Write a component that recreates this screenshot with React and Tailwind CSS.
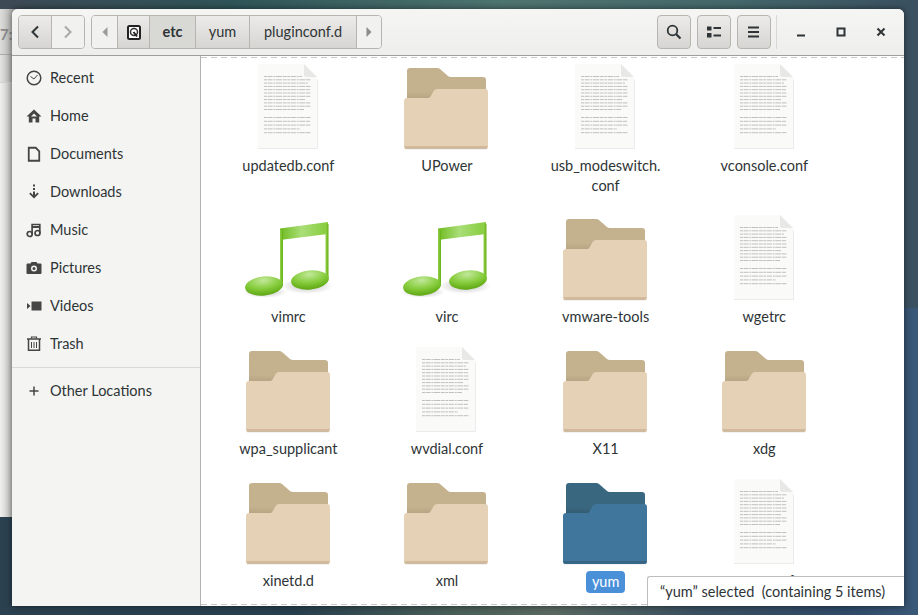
const FONT = "font-['Lato','Noto_Sans',sans-serif]";

function Folder({ selected }) {
  const id = selected ? "s" : "n";
  const c = selected
    ? { b1: "#3a6780", b2: "#2f566b", f1: "#41769c", f2: "#3e7297", e: "#356583" }
    : { b1: "#c4b28f", b2: "#ae9c7b", f1: "#e4d1b6", f2: "#e2d0b4", e: "#d3b999" };
  return (
    <svg width="84" height="82" viewBox="0 0 84 82">
      <defs>
        <linearGradient id={`back${id}`} x1="0" y1="0" x2="0" y2="1">
          <stop offset="0" stopColor={c.b1} />
          <stop offset="0.7" stopColor={c.b1} />
          <stop offset="1" stopColor={c.b2} />
        </linearGradient>
      </defs>
      <path d="M3 3q0-3 3-3h27q2 0 3 1l8 7q1 1 3 1h32q3 0 3 3v22H3z" fill={`url(#back${id})`} />
      <path d="M0 33q0-3 3-3h21q1.500 0 2.500-1.500l3.500-6q1-1.500 3-1.500h48q3 0 3 3v55q0 2-2 2H2q-2 0-2-2z" fill={c.f1} />
      <path d="M0.500 78h83v1q0 1-2 1H2.500q-2 0-2-1z" fill={c.e} />
      <rect x="1" y="80" width="82" height="1.500" fill="#000" opacity="0.1" />
    </svg>
  );
}

const linesA = [38, 47, 44, 47, 46, 47, 47, 41, 47, 47, 40];
const linesB = [47, 46, 47, 36, 47];

function Doc() {
  const dash = "3 0.6 5 0.8 2 0.6 6 0.7 4 0.6";
  return (
    <svg width="62" height="86" viewBox="0 0 62 86">
      <path d="M1 1h46l14 14v69H1z" fill="#000" opacity="0.08" transform="translate(0 1)" />
      <path d="M1 0h46l13 13v71H1z" fill="#fafaf9" />
      <path d="M47 0l13 13H49q-2 0-2-2z" fill="#e8e8e6" />
      {linesA.map((w, i) => (
        <line key={i} x1="7" x2={7 + w} y1={12.500 + i * 3.300} y2={12.500 + i * 3.300} stroke="#9a9a9a" strokeWidth="1" strokeDasharray={dash} opacity="0.6" />
      ))}
      {linesB.map((w, i) => (
        <line key={i} x1="7" x2={7 + w} y1={53.500 + i * 3.800} y2={53.500 + i * 3.800} stroke="#9a9a9a" strokeWidth="1" strokeDasharray={dash} opacity="0.6" />
      ))}
    </svg>
  );
}

function Note() {
  return (
    <svg width="90" height="84" viewBox="0 0 90 84">
      <defs>
        <radialGradient id="ng" cx="0.5" cy="0.2" r="0.8">
          <stop offset="0" stopColor="#c2e89a" />
          <stop offset="0.55" stopColor="#86cc3c" />
          <stop offset="1" stopColor="#5ea612" />
        </radialGradient>
        <linearGradient id="nb" x1="0" y1="0" x2="1" y2="0">
          <stop offset="0" stopColor="#6fba20" />
          <stop offset="0.45" stopColor="#aade78" />
          <stop offset="1" stopColor="#85cc3a" />
        </linearGradient>
        <linearGradient id="st" x1="0" y1="0" x2="1" y2="0">
          <stop offset="0" stopColor="#93d24e" />
          <stop offset="1" stopColor="#66b014" />
        </linearGradient>
        <radialGradient id="ns">
          <stop offset="0" stopColor="#000" stopOpacity="0.25" />
          <stop offset="1" stopColor="#000" stopOpacity="0" />
        </radialGradient>
      </defs>
      <ellipse cx="22" cy="76" rx="22" ry="6" fill="url(#ns)" />
      <ellipse cx="64" cy="70" rx="26" ry="8" fill="url(#ns)" />
      <path d="M37 12.500L85 6v12L37 24z" fill="url(#nb)" />
      <rect x="37" y="14" width="3" height="56" fill="url(#st)" />
      <rect x="82.500" y="8" width="3" height="54" fill="url(#st)" />
      <ellipse cx="21" cy="70" rx="19" ry="9.500" transform="rotate(-6 21 70)" fill="url(#ng)" />
      <ellipse cx="67" cy="64" rx="19" ry="9.500" transform="rotate(-6 67 64)" fill="url(#ng)" />
    </svg>
  );
}

const items = [
  ["doc", "updatedb.conf"], ["folder", "UPower"], ["doc", "usb_modeswitch.\nconf"], ["doc", "vconsole.conf"],
  ["note", "vimrc"], ["note", "virc"], ["folder", "vmware-tools"], ["doc", "wgetrc"],
  ["folder", "wpa_supplicant"], ["doc", "wvdial.conf"], ["folder", "X11"], ["folder", "xdg"],
  ["folder", "xinetd.d"], ["folder", "xml"], ["sel", "yum"], ["doc", "yum.conf"],
];

const ic = "#454545";
const sideIcons = {
  Recent: (
    <g fill="none" stroke={ic}>
      <circle cx="8" cy="8" r="6.800" strokeWidth="1.500" />
      <path d="M4.500 6.500L8 9l3.500-4" strokeWidth="1" />
    </g>
  ),
  Home: <path d="M8 1.500L0.500 8.500h2.300V14.500h3.700V10.500h3v4h3.700V8.500h2.300z M5 8.500L8 5.500l3 3z" fill={ic} fillRule="evenodd" />,
  Documents: <path d="M2.750 1.750h7l3.500 3.500v9.500h-10.500z" fill="none" stroke={ic} strokeWidth="1.800" />,
  Downloads: <path d="M7 0.500h2v2H7zM7 4h2v2H7zM7 7.500h2V11l2.500-2.500 1.300 1.300L8 14.500 3.200 9.800l1.300-1.300L7 11z" fill={ic} />,
  Music: (
    <g fill="none" stroke={ic} strokeWidth="1.700">
      <circle cx="3.700" cy="12" r="2.500" />
      <circle cx="11.500" cy="11" r="2.500" />
      <path d="M6.100 12V2.500h7.700V11" />
      <path d="M6 5h8" strokeWidth="2" />
    </g>
  ),
  Pictures: <path d="M1.500 3.500h3l1-1.500h5l1 1.500h3q1 0 1 1v8.500q0 1-1 1h-13q-1 0-1-1V4.500q0-1 1-1zM8 5.500a3 3 0 100 6 3 3 0 000-6zM8 7a1.500 1.500 0 110 3 1.500 1.500 0 010-3z" fill={ic} fillRule="evenodd" />,
  Videos: <path d="M5.500 3.500h10v9h-10zM1 5l3.500 3L1 11z" fill={ic} />,
  Trash: (
    <g fill="none" stroke={ic}>
      <path d="M1 3h14" strokeWidth="1.500" />
      <path d="M5.500 2.500V1h5v1.500" strokeWidth="1.200" />
      <path d="M2.500 3v11.300h11V3" strokeWidth="1.500" />
      <path d="M5.500 6v6M8 6v6M10.500 6v6" strokeWidth="1" />
    </g>
  ),
};

function SideRow({ label }) {
  return (
    <div className="h-[38px] flex items-center pl-[14px]">
      <svg width="16" height="16" viewBox="0 0 16 16" className="shrink-0">{sideIcons[label]}</svg>
      <span className="ml-[8px]">{label}</span>
    </div>
  );
}

const btnGrad = "bg-[linear-gradient(#ecebe9,#d6d5d2)]";
const border = "border border-[#b6b5b0]";

function ToolBtn({ children }) {
  return (
    <div className={`w-[34px] h-[34px] rounded-[4px] ${border} ${btnGrad} flex items-center justify-center`}>
      {children}
    </div>
  );
}

export default function App() {
  return (
    <div className={`relative w-[918px] h-[615px] overflow-hidden text-[14.5px] text-[#2e3436] ${FONT} flex flex-col`}>
      {/* desktop wallpaper */}
      <div className="flex-1 bg-[linear-gradient(90deg,#3d4a55_0%,#2f5558_25%,#4f7570_55%,#44686b_80%,#3a5060_100%)]" />
      <div className="flex-1 bg-[linear-gradient(90deg,#2c4150_0%,#28404f_32%,#4a6058_50%,#5a6a62_60%,#3a5060_76%,#2f4a68_92%,#3a5878_100%)]" />

      {/* window behind */}
      <div className="absolute left-0 top-[9px] w-[30px] h-[508px] bg-[linear-gradient(90deg,#f0f0ee,#c4c4c2_40%)]">
        <div className="h-[46px] flex items-center border-b border-[#a8a8a6] bg-[linear-gradient(90deg,#dcdcda,#b8b8b6_40%)] text-[#8a8a8a] font-bold text-[15px] pt-[6px]">7:</div>
        <div className="h-[28px] border-b border-[#d0d0ce] bg-[linear-gradient(90deg,#e4e4e2,#b4b4b2_40%)]" />
      </div>

      {/* main window */}
      <div className="absolute left-[12px] top-[9px] w-[892px] h-[597px] flex flex-col rounded-t-[6px] overflow-hidden bg-white shadow-[0_0_7px_rgba(0,0,0,0.55)]">
        {/* header */}
        <div className="h-[47px] shrink-0 flex items-center pl-[6px] pr-0 border-b border-[#9f9f9c] bg-[linear-gradient(#f5f5f4,#eeeeec)]">
          <div className={`flex h-[34px] w-[67px] rounded-[4px] ${border}`}>
            <div className={`w-[33px] flex items-center justify-center border-r border-[#b6b5b0] rounded-l-[3px] ${btnGrad}`}>
              <svg width="12" height="14" viewBox="0 0 12 14"><path d="M9 1.500L3.500 7 9 12.500" fill="none" stroke="#2e3436" strokeWidth="2" /></svg>
            </div>
            <div className="flex-1 flex items-center justify-center bg-[#f1f1ef] rounded-r-[3px]">
              <svg width="12" height="14" viewBox="0 0 12 14"><path d="M3 1.500L8.500 7 3 12.500" fill="none" stroke="#a5a7a8" strokeWidth="2" /></svg>
            </div>
          </div>
          <div className={`ml-[6px] flex h-[34px] w-[291px] rounded-[4px] ${border} overflow-hidden`}>
            <div className="w-[25px] flex items-center justify-center bg-[#f1f1ef]">
              <svg width="6" height="10" viewBox="0 0 6 10"><path d="M5.500 0v10L0.500 5z" fill="#9a9c9d" /></svg>
            </div>
            <div className={`w-[33px] flex items-center justify-center border-x border-[#b6b5b0] ${btnGrad}`}>
              <svg width="14" height="15" viewBox="0 0 14 15">
                <rect x="1" y="1" width="12" height="13" rx="1.500" fill="#fff" stroke="#222" strokeWidth="2" />
                <circle cx="7" cy="7" r="3.500" fill="none" stroke="#333" strokeWidth="1.500" />
                <path d="M6.500 7l3.500 4.500" stroke="#222" strokeWidth="2" />
              </svg>
            </div>
            <div className="w-[46px] flex items-center justify-center border-r border-[#b6b5b0] font-bold bg-[#d8d8d5]">etc</div>
            <div className={`w-[54px] flex items-center justify-center border-r border-[#b6b5b0] ${btnGrad}`}>yum</div>
            <div className={`w-[107px] flex items-center justify-center border-r border-[#b6b5b0] ${btnGrad}`}>pluginconf.d</div>
            <div className="flex-1 flex items-center justify-center bg-[#f1f1ef]">
              <svg width="6" height="10" viewBox="0 0 6 10"><path d="M0.500 0v10L5.500 5z" fill="#8a8c8d" /></svg>
            </div>
          </div>
          <div className="ml-auto flex items-center gap-[6px]">
            <ToolBtn>
              <svg width="16" height="16" viewBox="0 0 16 16" fill="none" stroke="#2e3436"><circle cx="6.500" cy="6.500" r="4.800" strokeWidth="1.800" /><path d="M10 10l4.500 4.500" strokeWidth="2.200" /></svg>
            </ToolBtn>
            <ToolBtn>
              <svg width="14" height="12" viewBox="0 0 14 12" fill="#2e3436"><rect x="0" y="0.500" width="4.500" height="4" /><rect x="0" y="7" width="4.500" height="4.500" /><rect x="6.500" y="1" width="7.500" height="2" /><rect x="6.500" y="8.500" width="7.500" height="2" /></svg>
            </ToolBtn>
            <ToolBtn>
              <svg width="12" height="12" viewBox="0 0 12 12" fill="#2e3436"><rect y="0.500" width="11" height="2" /><rect y="5" width="11" height="2" /><rect y="9.500" width="11" height="2" /></svg>
            </ToolBtn>
          </div>
          <div className="ml-[5px] w-px h-[34px] bg-[#d8d8d6]" />
          <div className="w-[127px] flex items-center justify-between pl-[19px] pr-[18px]">
            <svg width="10" height="10" viewBox="0 0 10 10"><rect x="1" y="7.500" width="8" height="2" fill="#2e3436" /></svg>
            <svg width="10" height="10" viewBox="0 0 10 10"><rect x="1.500" y="1.500" width="7" height="7" fill="none" stroke="#2e3436" strokeWidth="2" /></svg>
            <svg width="10" height="10" viewBox="0 0 10 10"><path d="M1.500 1.500l7 7M8.500 1.500l-7 7" stroke="#2e3436" strokeWidth="2" /></svg>
          </div>
        </div>

        {/* body */}
        <div className="flex-1 min-h-0 flex">
          <div className="w-[189px] shrink-0 bg-[#f4f4f2] border-r border-[#b2b2af] pt-[3px]">
            {Object.keys(sideIcons).map((l) => <SideRow key={l} label={l} />)}
            <div className="h-px bg-[#d9d9d7] mt-[4px]" />
            <div className="h-[46px] flex items-center pl-[14px]">
              <svg width="16" height="16" viewBox="0 0 16 16"><path d="M7.250 3.500h1.500v3.750h3.750v1.500H8.750v3.750h-1.500V8.750H3.500v-1.500h3.750z" fill={ic} /></svg>
              <span className="ml-[8px]">Other Locations</span>
            </div>
          </div>

          <div className="relative flex-1 min-w-0 overflow-hidden bg-white">
            <div className="pl-[8px] pt-[2px] grid grid-cols-[repeat(4,158.67px)] grid-rows-[151px_132px_132px_132px]">
              {items.map(([t, name]) => (
                <div key={name} className="flex flex-col items-center">
                  <div className={`h-[96px] w-full flex items-end justify-center pr-[1px] ${t === "note" ? "pb-[5px]" : "pb-[4px]"}`}>
                    {t === "doc" && <Doc />}
                    {(t === "folder" || t === "sel") && <Folder selected={t === "sel"} />}
                    {t === "note" && <Note />}
                  </div>
                  {t === "sel" ? (
                    <div className="mt-[2px] bg-[#4a90d9] text-white rounded-[4px] px-[6px] h-[22px] leading-[22px]">{name}</div>
                  ) : (
                    <div className="mt-[2px] text-center whitespace-pre-line leading-[20px]">{name}</div>
                  )}
                </div>
              ))}
            </div>
            <div className="absolute left-0 right-0 top-[1px] h-px bg-[repeating-linear-gradient(90deg,#c9c9c9_0,#c9c9c9_6px,transparent_6px,transparent_10px)]" />
            <div className="absolute left-0 right-0 bottom-[1px] h-px bg-[repeating-linear-gradient(90deg,#c9c9c9_0,#c9c9c9_6px,transparent_6px,transparent_10px)]" />
            <div className="absolute right-0 bottom-0 w-[257px] h-[30px] bg-white border-t border-l border-[#bdbdbb] rounded-tl-[3px] pl-[12px] flex items-center whitespace-pre">“yum” selected  (containing 5 items)</div>
          </div>
        </div>
      </div>
    </div>
  );
}
